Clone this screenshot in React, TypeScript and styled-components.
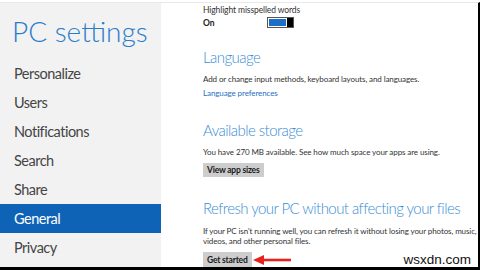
import styled, { createGlobalStyle } from "styled-components";

const GlobalStyle = createGlobalStyle`
  html, body {
    margin: 0;
    padding: 0;
    background: #ffffff;
  }
  body {
    font-family: Lato, "Open Sans", "Liberation Sans", sans-serif;
  }
`;

const menuItems = [
  "Personalize",
  "Users",
  "Notifications",
  "Search",
  "Share",
  "General",
  "Privacy",
];

export default function App() {
  return (
    <>
      <GlobalStyle />
      <Page>
        <Frame>
          <Sidebar>
            <Title>PC settings</Title>
            <Menu>
              {menuItems.map((item) => (
                <MenuItem key={item} $active={item === "General"}>
                  {item}
                </MenuItem>
              ))}
            </Menu>
          </Sidebar>
          <Content>
            <Label>Highlight misspelled words</Label>
            <ToggleRow>
              <ToggleState>On</ToggleState>
              <Toggle>
                <ToggleFill />
                <ToggleThumb />
              </Toggle>
            </ToggleRow>

            <Heading $top={19}>Language</Heading>
            <Text $top={8}>
              Add or change input methods, keyboard layouts, and languages.
            </Text>
            <Link $top={3}>Language preferences</Link>

            <Heading $top={21}>Available storage</Heading>
            <Text $top={8}>
              You have 270 MB available. See how much space your apps are using.
            </Text>
            <Button $top={6}>View app sizes</Button>

            <Heading $top={21}>Refresh your PC without affecting your files</Heading>
            <Text $top={9}>
              If your PC isn't running well, you can refresh it without losing your photos, music,
              <br />
              videos, and other personal files.
            </Text>
            <ButtonRow>
              <Button $top={0}>Get started</Button>
              <Arrow width="38" height="12" viewBox="0 0 38 12">
                <path d="M38 6 H9" stroke="#e3231c" strokeWidth="2.6" />
                <path d="M0 6 L11 1 L11 11 Z" fill="#e3231c" />
              </Arrow>
            </ButtonRow>
          </Content>
          <Watermark>wsxdn.com</Watermark>
        </Frame>
      </Page>
    </>
  );
}

const Page = styled.div`
  width: 480px;
  height: 270px;
  padding-top: 2px;
  box-sizing: border-box;
  background: #ffffff;
`;

const Frame = styled.div`
  position: relative;
  display: flex;
  height: 268px;
  box-sizing: border-box;
  border-top: 1px solid #e9e9e9;
  border-right: 2px solid #000000;
  border-bottom: 3px solid #000000;
  overflow: hidden;
`;

const Sidebar = styled.nav`
  width: 161px;
  flex-shrink: 0;
  background: #f2f2f2;
  padding-top: 8px;
  box-sizing: border-box;
`;

const Title = styled.h1`
  margin: 0 0 8px;
  padding-left: 12px;
  font-size: 28px;
  line-height: 40px;
  font-weight: 300;
  color: #2a7ccb;
  white-space: nowrap;
`;

const Menu = styled.ul`
  list-style: none;
  margin: 0;
  padding: 0;
`;

const MenuItem = styled.li<{ $active?: boolean }>`
  height: 29px;
  line-height: 29px;
  padding-left: 14px;
  font-size: 14.5px;
  letter-spacing: -0.5px;
  font-weight: 400;
  color: ${(p) => (p.$active ? "#ffffff" : "#454545")};
  background: ${(p) => (p.$active ? "#0f63b6" : "transparent")};
`;

const Content = styled.main`
  flex: 1;
  padding: 1px 0 0 42px;
  display: flex;
  flex-direction: column;
  align-items: flex-start;
  color: #333333;
`;

const Label = styled.div`
  font-size: 8.5px;
  line-height: 12px;
  letter-spacing: -0.1px;
  color: #333333;
`;

const ToggleRow = styled.div`
  display: flex;
  align-items: center;
  height: 11px;
  margin-top: 1px;
`;

const ToggleState = styled.span`
  width: 64px;
  font-size: 8.5px;
  font-weight: 700;
  color: #222222;
`;

const Toggle = styled.div`
  display: flex;
  width: 25px;
  height: 9px;
  border: 1px solid #555555;
  box-sizing: content-box;
`;

const ToggleFill = styled.div`
  flex: 1;
  background: #1c6fc6;
  border: 1px solid #ffffff;
`;

const ToggleThumb = styled.div`
  width: 6px;
  background: #000000;
`;

const Heading = styled.h2<{ $top: number }>`
  margin: ${(p) => p.$top}px 0 0;
  font-size: 15px;
  line-height: 20px;
  letter-spacing: -0.55px;
  font-weight: 300;
  color: #3a8dd4;
  white-space: nowrap;
`;

const Text = styled.p<{ $top: number }>`
  margin: ${(p) => p.$top}px 0 0;
  font-size: 8px;
  line-height: 9.5px;
  letter-spacing: -0.1px;
  color: #333333;
  white-space: nowrap;
`;

const Link = styled.a<{ $top: number }>`
  margin-top: ${(p) => p.$top}px;
  font-size: 8px;
  line-height: 11px;
  letter-spacing: -0.1px;
  color: #1f70c2;
`;

const ButtonRow = styled.div`
  display: flex;
  align-items: center;
  margin-top: 6px;
`;

const Button = styled.button<{ $top: number }>`
  margin-top: ${(p) => p.$top}px;
  height: 15px;
  padding: 0 4px;
  border: none;
  background: #cdcdcd;
  font-family: Lato, "Open Sans", sans-serif;
  font-size: 8.5px;
  letter-spacing: -0.2px;
  font-weight: 700;
  color: #1a1a1a;
`;

const Arrow = styled.svg`
  margin-left: 1px;
`;

const Watermark = styled.div`
  position: absolute;
  right: 4px;
  bottom: 0;
  padding: 2px 3px 0;
  line-height: 15px;
  background: #ffffff;
  font-family: "Liberation Sans", sans-serif;
  font-size: 13.5px;
  color: #111111;
`;
